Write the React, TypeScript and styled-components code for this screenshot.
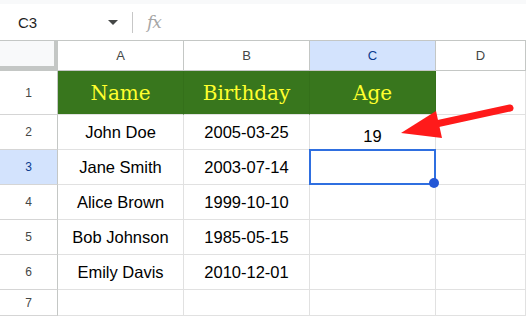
import React from "react";
import styled, { createGlobalStyle } from "styled-components";

const GlobalStyle = createGlobalStyle`
  html, body {
    margin: 0;
    padding: 0;
    background: #ffffff;
    overflow: hidden;
  }
  body {
    font-family: "Liberation Sans", Arial, sans-serif;
  }
`;

const Page = styled.div`
  position: relative;
  width: 526px;
  height: 316px;
  overflow: hidden;
  background: #fff;
`;

const TopStrip = styled.div`
  height: 4px;
  background: #f8f9fa;
`;

const FormulaBar = styled.div`
  display: flex;
  align-items: center;
  height: 36px;
  border-bottom: 1px solid #c4c7c5;
`;

const NameBox = styled.div`
  display: flex;
  align-items: center;
  justify-content: space-between;
  width: 100px;
  padding: 0 14px 0 18px;
  font-size: 15px;
  color: #1f1f1f;
`;

const Caret = styled.span`
  width: 0;
  height: 0;
  border-left: 5px solid transparent;
  border-right: 5px solid transparent;
  border-top: 5px solid #444746;
  margin-top: 1px;
`;

const Divider = styled.span`
  width: 1px;
  height: 21px;
  background: #c7c7c7;
`;

const Fx = styled.span`
  margin-left: 14px;
  font-family: "DejaVu Serif", "Liberation Serif", serif;
  font-style: italic;
  font-size: 17px;
  color: #a6a6a6;
  letter-spacing: -1px;
`;

const Grid = styled.div`
  display: grid;
  grid-template-columns: 58px 126px 126px 126px 1fr;
  grid-template-rows: 30px 44px repeat(5, 35px) 26px;
`;

const Corner = styled.div`
  box-sizing: border-box;
  background: #f8f9fa;
  border-right: 4px solid #c4c7c5;
  border-bottom: 5px solid #c4c7c5;
`;

const ColHead = styled.div<{ $active?: boolean }>`
  box-sizing: border-box;
  display: flex;
  align-items: center;
  justify-content: center;
  font-size: 13px;
  color: ${(p) => (p.$active ? "#0b3c8f" : "#444746")};
  background: ${(p) => (p.$active ? "#d3e3fd" : "#ffffff")};
  border-right: 1px solid #c4c7c5;
  border-bottom: 1px solid #c4c7c5;
`;

const RowHead = styled.div<{ $active?: boolean }>`
  box-sizing: border-box;
  display: flex;
  align-items: center;
  justify-content: center;
  font-size: 12px;
  color: ${(p) => (p.$active ? "#0b3c8f" : "#444746")};
  background: ${(p) => (p.$active ? "#d3e3fd" : "#ffffff")};
  border-right: 1px solid #c4c7c5;
  border-bottom: 1px solid #d5d5d5;
`;

const Cell = styled.div<{ $bottom?: boolean }>`
  position: relative;
  box-sizing: border-box;
  display: flex;
  align-items: ${(p) => (p.$bottom ? "flex-end" : "center")};
  justify-content: center;
  padding-bottom: ${(p) => (p.$bottom ? "3px" : "0")};
  font-size: 16.5px;
  color: #000;
  border-right: 1px solid #e1e1e1;
  border-bottom: 1px solid #e1e1e1;
`;

const TitleCell = styled.div`
  box-sizing: border-box;
  display: flex;
  align-items: center;
  justify-content: center;
  background: #38761d;
  color: #ffff2e;
  font-family: "DejaVu Serif", "Liberation Serif", serif;
  font-size: 20px;
  border-right: 1px solid #34701a;
  border-bottom: 1px solid #e1e1e1;
`;

const Selection = styled.div`
  position: absolute;
  z-index: 2;
  top: -1px;
  left: -1px;
  right: -1px;
  bottom: -1px;
  border: 2px solid #2f6fe0;
  pointer-events: none;
`;

const Handle = styled.span`
  position: absolute;
  right: -5px;
  bottom: -5px;
  width: 10px;
  height: 10px;
  border-radius: 50%;
  background: #2457d6;
`;

const Overlay = styled.svg`
  position: absolute;
  z-index: 3;
  top: 0;
  left: 0;
  pointer-events: none;
`;

const headers = ["Name", "Birthday", "Age"];

const people = [
  { name: "John Doe", birthday: "2005-03-25", age: "19" },
  { name: "Jane Smith", birthday: "2003-07-14", age: "" },
  { name: "Alice Brown", birthday: "1999-10-10", age: "" },
  { name: "Bob Johnson", birthday: "1985-05-15", age: "" },
  { name: "Emily Davis", birthday: "2010-12-01", age: "" },
];

export default function App() {
  return (
    <Page>
      <GlobalStyle />
      <TopStrip />
      <FormulaBar>
        <NameBox>
          <span>C3</span>
          <Caret />
        </NameBox>
        <Divider />
        <Fx>fx</Fx>
      </FormulaBar>

      <Grid>
        <Corner />
        {["A", "B", "C", "D"].map((c) => (
          <ColHead key={c} $active={c === "C"}>
            {c}
          </ColHead>
        ))}

        <RowHead>1</RowHead>
        {headers.map((h) => (
          <TitleCell key={h}>{h}</TitleCell>
        ))}
        <Cell />

        {people.map((p, i) => {
          const row = i + 2;
          return (
            <React.Fragment key={p.name}>
              <RowHead $active={row === 3}>{row}</RowHead>
              <Cell>{p.name}</Cell>
              <Cell>{p.birthday}</Cell>
              <Cell $bottom>
                {p.age}
                {row === 3 && (
                  <Selection>
                    <Handle />
                  </Selection>
                )}
              </Cell>
              <Cell />
            </React.Fragment>
          );
        })}

        <RowHead>7</RowHead>
        <Cell />
        <Cell />
        <Cell />
        <Cell />
      </Grid>

      <Overlay width="526" height="316" viewBox="0 0 526 316">
        <line x1="510" y1="108" x2="436" y2="124" stroke="#ff1a1a" strokeWidth="7" strokeLinecap="round" />
        <polygon points="401,133 436,111 442,138" fill="#ff1a1a" />
      </Overlay>
    </Page>
  );
}
